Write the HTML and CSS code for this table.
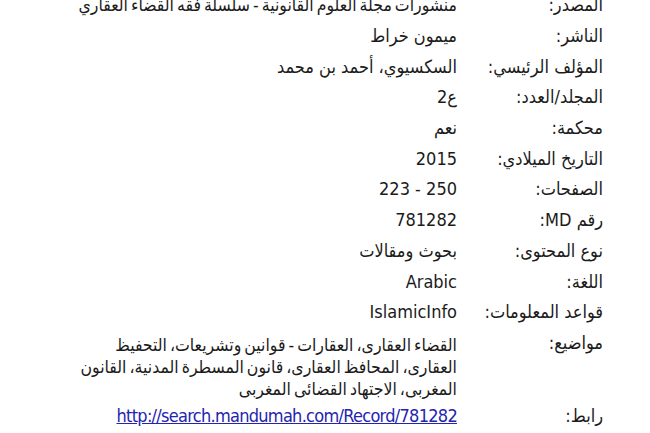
FILE: index.html
```html
<!DOCTYPE html>
<html lang="ar" dir="rtl">
<head>
<meta charset="utf-8">
<link rel="stylesheet" href="styles.css">
</head>
<body>
<div class="record">
  <div class="label">المصدر:</div>
  <div class="value long nowrap">منشورات مجلة العلوم القانونية - سلسلة فقه القضاء العقاري</div>

  <div class="label">الناشر:</div>
  <div class="value">ميمون خراط</div>

  <div class="label">المؤلف الرئيسي:</div>
  <div class="value">السكسيوي، أحمد بن محمد</div>

  <div class="label">المجلد/العدد:</div>
  <div class="value">ع2</div>

  <div class="label">محكمة:</div>
  <div class="value">نعم</div>

  <div class="label">التاريخ الميلادي:</div>
  <div class="value">2015</div>

  <div class="label">الصفحات:</div>
  <div class="value">250 - 223</div>

  <div class="label">رقم MD:</div>
  <div class="value">781282</div>

  <div class="label">نوع المحتوى:</div>
  <div class="value">بحوث ومقالات</div>

  <div class="label">اللغة:</div>
  <div class="value">Arabic</div>

  <div class="label">قواعد المعلومات:</div>
  <div class="value">IslamicInfo</div>

  <div class="label">مواضيع:</div>
  <div class="value long multi">القضاء العقارى، العقارات - قوانين وتشريعات، التحفيظ<br>العقارى، المحافظ العقارى، قانون المسطرة المدنية، القانون<br>المغربى، الاجتهاد القضائى المغربى</div>

  <div class="label">رابط:</div>
  <div class="value"><a class="link" href="#" dir="ltr">http://search.mandumah.com/Record/781282</a></div>
</div>
</body>
</html>
```

FILE: styles.css
```css
html, body {
  margin: 0;
  padding: 0;
  background: #ffffff;
}

body {
  direction: rtl;
  font-family: "DejaVu Sans Condensed", "DejaVu Sans", sans-serif;
  font-size: 18px;
  color: #1b1b1b;
  overflow: hidden;
}

.record {
  display: grid;
  grid-template-columns: 146px auto;
  justify-content: start;
  padding-right: 47px;
  margin-top: -10px;
}

.label,
.value {
  line-height: 22px;
  padding: 4.35px 0;
  text-align: right;
}

.nowrap {
  white-space: nowrap;
}

.long {
  font-size: 17.5px;
  word-spacing: -2px;
}

.multi {
  line-height: 22px;
  padding: 6.35px 0 0.35px;
}

.link {
  color: #2424b0;
  text-decoration: underline;
  letter-spacing: -0.72px;
}
```
